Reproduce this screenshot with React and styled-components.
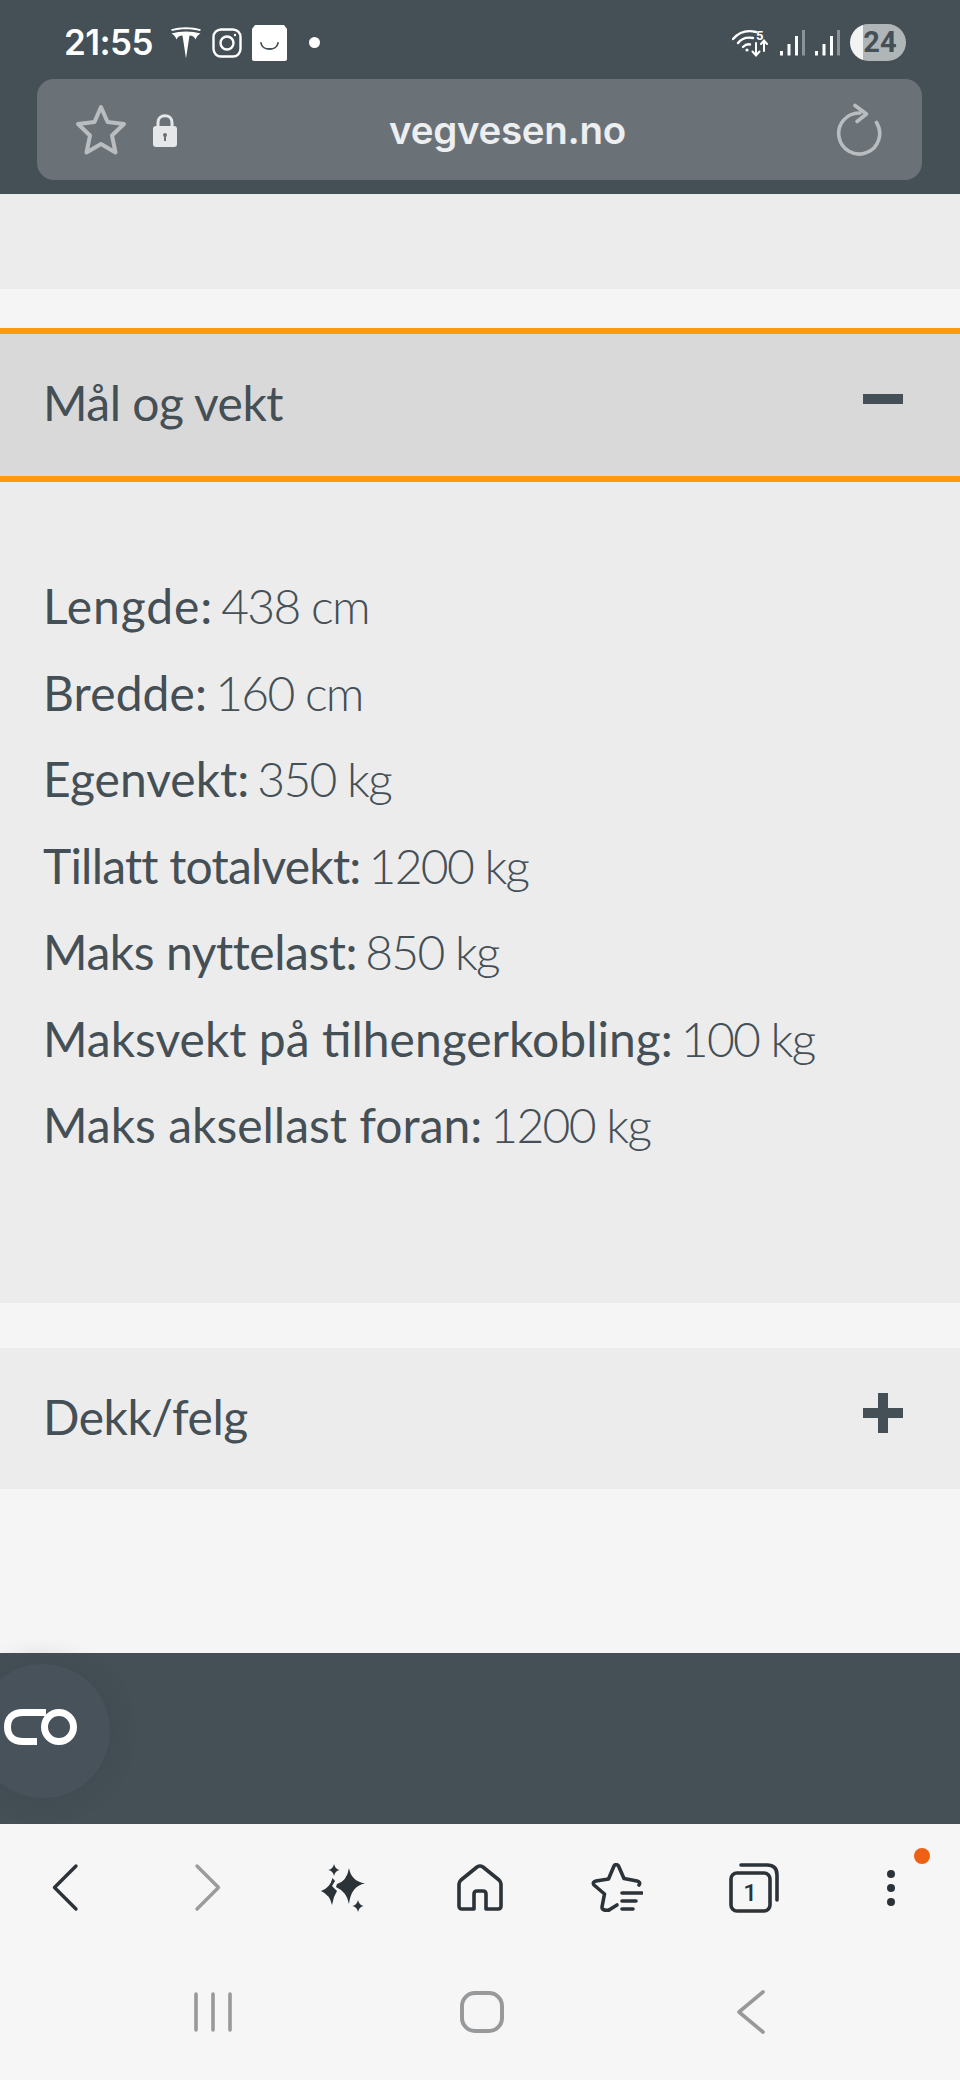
import React from 'react';
import styled, { createGlobalStyle } from 'styled-components';

// track evens out the width differences against the original typeface
const rows = [
  { label: 'Lengde:', value: '438 cm', track: 0.9 },
  { label: 'Bredde:', value: '160 cm', track: 0.1 },
  { label: 'Egenvekt:', value: '350 kg', track: 0 },
  { label: 'Tillatt totalvekt:', value: '1200 kg', track: -0.8 },
  { label: 'Maks nyttelast:', value: '850 kg', track: -0.45 },
  { label: 'Maksvekt på tilhengerkobling:', value: '100 kg', track: 0 },
  { label: 'Maks aksellast foran:', value: '1200 kg', track: 0 },
];

const Global = createGlobalStyle`
  html, body { margin: 0; padding: 0; background: #f5f5f5; }
  * { box-sizing: border-box; }
`;

const Page = styled.div`
  width: 960px;
  height: 2080px;
  display: flex;
  flex-direction: column;
  overflow: hidden;
  position: relative;
  background: #f5f5f5;
  font-family: Lato, "Open Sans", sans-serif;
  color: #444f56;
`;

const TopBar = styled.header`
  height: 194px;
  background: #444f56;
  padding: 24px 38px 14px 37px;
  display: flex;
  flex-direction: column;
  justify-content: space-between;
`;

const StatusRow = styled.div`
  height: 37px;
  display: flex;
  align-items: center;
  justify-content: space-between;
  padding: 0 16px 0 27px;
`;

const StatusGroup = styled.div`
  display: flex;
  align-items: center;
  gap: 10px;
`;

const Time = styled.span`
  font: 600 35px/37px Inter, Roboto, sans-serif;
  letter-spacing: -0.6px;
  color: #fff;
  margin-right: 7px;
`;

const NoticeDot = styled.span`
  width: 11px;
  height: 11px;
  border-radius: 50%;
  background: #fff;
  margin-left: 12px;
`;

const Battery = styled.div`
  width: 56px;
  height: 37px;
  border-radius: 19px;
  background: linear-gradient(90deg, #f2f3f3 0 13px, #b0b5b8 13px);
  color: #444f56;
  font: 700 29px/37px Roboto, sans-serif;
  text-align: center;
  padding-left: 4px;
`;

const UrlBar = styled.div`
  height: 101px;
  border-radius: 17px;
  background: #6a7278;
  display: flex;
  align-items: center;
  padding: 0 40px 0 38px;
`;

const UrlText = styled.div`
  flex: 1;
  text-align: center;
  font: 600 38.5px/46px Inter, Roboto, sans-serif;
  letter-spacing: -0.3px;
  color: #eceef0;
  margin-left: 1px;
`;

const LockSlot = styled.div`
  margin-left: 25px;
  display: flex;
`;

const Main = styled.main`
  flex: 1;
  display: flex;
  flex-direction: column;
`;

const Band = styled.div`
  height: 95px;
  background: #ececec;
  margin-bottom: 39px;
`;

const AccordionHeader = styled.div`
  display: flex;
  align-items: center;
  justify-content: space-between;
  padding: 0 57px 0 43px;
  height: ${(p) => (p.$open ? 154 : 141)}px;
  background: ${(p) => (p.$open ? '#d9d9d9' : '#ececec')};
  border-top: ${(p) => (p.$open ? '6px solid #ff9a0d' : 'none')};
  border-bottom: ${(p) => (p.$open ? '6px solid #ff9a0d' : 'none')};
`;

const Title = styled.h2`
  margin: 0 0 4px;
  font-size: 48px;
  font-weight: 400;
  line-height: 60px;
  letter-spacing: -0.5px;
`;

const ToggleIcon = styled.svg`
  display: block;
  margin-bottom: 12px;
`;

const Panel = styled.div`
  height: 821px;
  background: #ececec;
  padding: 81px 43px 0;
  margin-bottom: 45px;
`;

const Row = styled.div`
  height: 86.5px;
  line-height: 86.5px;
  font-size: 48px;
  white-space: nowrap;
  font-weight: 300;
`;

const RowLabel = styled.span`
  font-weight: 400;
  letter-spacing: ${(p) => p.$track}px;
`;

const RowValue = styled.span`
  letter-spacing: -1.7px;
  margin-left: -5px;
`;

const Footer = styled.footer`
  height: 171px;
  background: #444f56;
  position: relative;
  flex: none;
`;

const ChatBubble = styled.div`
  position: absolute;
  left: -24px;
  top: 11px;
  width: 134px;
  height: 134px;
  border-radius: 50%;
  background: #47525a;
  box-shadow: 0 0 24px rgba(60, 66, 74, 0.45);
  display: flex;
  align-items: center;
  justify-content: flex-end;
  padding: 0 32px 8px 0;
`;

const BrowserNav = styled.nav`
  height: 126px;
  background: #f6f6f7;
  display: flex;
  align-items: center;
  padding-top: 1px;
`;

const NavCell = styled.div`
  width: 137px;
  display: flex;
  justify-content: center;
  position: relative;
  padding: 0 ${(p) => p.$right || 0}px 0 ${(p) => p.$left || 0}px;
`;

const Badge = styled.span`
  position: absolute;
  left: 92px;
  top: -22px;
  width: 16px;
  height: 16px;
  border-radius: 50%;
  background: #ee6115;
`;

const SystemNav = styled.div`
  height: 130px;
  background: #f6f6f7;
  display: grid;
  grid-template-columns: repeat(3, 269px);
  padding: 0 78px 6px;
  align-items: center;
  justify-items: center;
`;

const Icon = styled.svg`
  display: block;
  flex: none;
`;

function Tesla() {
  return (
    <Icon width="32" height="32" viewBox="0 0 32 32" fill="#fff">
      <path d="M16 31.5 L12.5 8.5 C9.5 8.5 7.5 10 6.5 12.5 C5.5 9.5 3.5 7.5 1.5 6.5 C10 3.8 22 3.8 30.5 6.5 C28.5 7.5 26.5 9.5 25.5 12.5 C24.5 10 22.5 8.5 19.5 8.5 Z" />
      <path d="M1 2.6 C10 -0.4 22 -0.4 31 2.6 L30 4 C22 1.6 10 1.6 2 4 Z" />
    </Icon>
  );
}

function Instagram() {
  return (
    <Icon width="30" height="30" viewBox="0 0 30 30" fill="none" stroke="#fff" strokeWidth="2.4">
      <rect x="1.5" y="1.5" width="27" height="27" rx="7.5" />
      <circle cx="15" cy="15" r="6.5" />
      <circle cx="23" cy="7" r="1.2" fill="#fff" stroke="none" />
    </Icon>
  );
}

function Bag() {
  return (
    <Icon width="35" height="36" viewBox="0 0 35 36">
      <path d="M3 0 H32 L35 4 V34 Q35 36 33 36 H2 Q0 36 0 34 V4 Z" fill="#fff" />
      <path d="M9 18 C10 26 25 26 26 18" fill="none" stroke="#444f56" strokeWidth="1.8" strokeLinecap="round" />
    </Icon>
  );
}

function Wifi() {
  return (
    <Icon width="38" height="28" viewBox="0 0 38 28" fill="none" stroke="#fff" strokeLinecap="round">
      <path d="M1 10 C8 2 16 1 24 3" strokeWidth="2.4" />
      <path d="M6 14 C10 9 16 8 21 9" strokeWidth="2.4" />
      <path d="M11 18 C13 16 16 15 18 15.5" strokeWidth="2.4" />
      <circle cx="15" cy="21" r="1.6" fill="#fff" stroke="none" />
      <path d="M24 14 V26 M20.5 22.5 L24 26.5 L27.5 22.5" strokeWidth="2" />
      <path d="M32 22 V12 M29 15 L32 11.5 L35 15" strokeWidth="2" />
      <text x="24" y="11" fontFamily="Roboto, sans-serif" fontSize="13" fontWeight="700" fill="#fff" stroke="none">5</text>
    </Icon>
  );
}

function Signal() {
  return (
    <Icon width="25" height="26" viewBox="0 0 25 26" fill="#fff">
      <rect x="0" y="21" width="3" height="4.5" />
      <rect x="7.5" y="14" width="3" height="11.5" />
      <rect x="15" y="6" width="3" height="19.5" />
      <rect x="22" y="0" width="3" height="25.5" fill="#8b9297" />
    </Icon>
  );
}

function StarOutline() {
  return (
    <Icon width="52" height="52" viewBox="0 0 52 52" fill="none" stroke="#b9bdc0" strokeWidth="4" strokeLinejoin="round">
      <path d="M26 3 L32.5 18 L49 20 L37 31.5 L40.5 48.5 L26 40 L11.5 48.5 L15 31.5 L3 20 L19.5 18 Z" />
    </Icon>
  );
}

function Lock() {
  return (
    <Icon width="26" height="34" viewBox="0 0 26 34">
      <path d="M6 15 V9.5 C6 0.5 20 0.5 20 9.5 V15" fill="none" stroke="#e6e7e9" strokeWidth="3" />
      <rect x="1" y="13" width="24" height="21" rx="3" fill="#e6e7e9" />
      <circle cx="13" cy="22" r="2" fill="#6a7278" />
      <rect x="12" y="22" width="2" height="6" fill="#6a7278" />
    </Icon>
  );
}

function Reload() {
  return (
    <Icon width="46" height="54" viewBox="0 0 46 54" fill="none" stroke="#b9bdc0" strokeWidth="3.6" strokeLinecap="round" strokeLinejoin="round">
      <path d="M40.5 19.5 A20.5 20.5 0 1 1 24 10" />
      <path d="M19 2.5 L30.5 11 L21 18.5" />
    </Icon>
  );
}

function Minus() {
  return (
    <ToggleIcon width="40" height="40" viewBox="0 0 40 40">
      <rect x="0" y="15" width="40" height="10" fill="#444f56" />
    </ToggleIcon>
  );
}

function Plus() {
  return (
    <ToggleIcon width="40" height="40" viewBox="0 0 40 40">
      <path d="M15 0 H25 V15 H40 V25 H25 V40 H15 V25 H0 V15 H15 Z" fill="#444f56" />
    </ToggleIcon>
  );
}

function ChatLogo() {
  return (
    <Icon width="74" height="36" viewBox="0 0 74 36" fill="none" stroke="#fff" strokeWidth="7">
      <path d="M42 3.5 H19 C8 3.5 3.5 10 3.5 18 C3.5 26 8 32.5 19 32.5 H33" />
      <circle cx="55" cy="18" r="14.5" />
    </Icon>
  );
}

function Back() {
  return (
    <Icon width="30" height="52" viewBox="0 0 30 52" fill="none" stroke="#2b3238" strokeWidth="3.4" strokeLinecap="round" strokeLinejoin="round">
      <path d="M25 4 L3.5 25.5 L25 47" />
    </Icon>
  );
}

function Forward() {
  return (
    <Icon width="30" height="52" viewBox="0 0 30 52" fill="none" stroke="#9a9b9d" strokeWidth="3.4" strokeLinecap="round" strokeLinejoin="round">
      <path d="M5 4 L26.5 25.5 L5 47" />
    </Icon>
  );
}

function Sparkles() {
  return (
    <Icon width="46" height="50" viewBox="0 0 46 50" fill="#2b3238">
      <path d="M29 5 Q31 18 45 20.5 Q31 23 29 41 Q27 29 16 24 L17 21 Q27 18 29 5 Z" />
      <path d="M12.5 15 L15 18 L12 23 L17 28 L14 34 L12 42 Q10 32 1 28 Q10 25 12.5 15 Z" />
      <path d="M14 1 Q15 6 19.5 7 Q15 8 14 13 Q13 8 8.5 7 Q13 6 14 1 Z" />
      <path d="M38 37 Q39 42 43.5 43 Q39 44 38 49 Q37 44 32.5 43 Q37 42 38 37 Z" />
    </Icon>
  );
}

function Home() {
  return (
    <Icon width="46" height="48" viewBox="0 0 46 48" fill="none" stroke="#2b3238" strokeWidth="3.6" strokeLinejoin="round" strokeLinecap="round">
      <path d="M17 45 H5 Q2 45 2 42 V20 Q2 18 4 16 L20 3 Q23 1 26 3 L42 16 Q44 18 44 20 V42 Q44 45 41 45 H29 V30 Q29 27 26 27 H20 Q17 27 17 30 Z" />
    </Icon>
  );
}

function StarList() {
  return (
    <Icon width="52" height="50" viewBox="0 0 52 50" fill="none" stroke="#2b3238" strokeWidth="3.6" strokeLinecap="round" strokeLinejoin="round">
      <path d="M18 47 Q11 48 11 44 L13.5 31 L3 22 Q1 19 5 18 L17.5 16 L23 3 Q25 0 27.5 3 L33 15.5 L46 18 Q50 19 48 22" />
      <path d="M18 47 L26 42" />
      <path d="M31 30 H51 M31 38 H45 M31 46 H42" />
    </Icon>
  );
}

function Tabs() {
  return (
    <Icon width="50" height="50" viewBox="0 0 50 50" fill="none" stroke="#2b3238" strokeWidth="3.6" strokeLinecap="round">
      <rect x="2" y="10" width="39" height="38" rx="6" />
      <path d="M12 2 H38 Q48 2 48 12 V37" />
      <text x="21" y="38" textAnchor="middle" fontFamily="Roboto, sans-serif" fontSize="24" fontWeight="500" fill="#2b3238" stroke="none">1</text>
    </Icon>
  );
}

function Dots() {
  return (
    <Icon width="8" height="36" viewBox="0 0 8 36" fill="#2b3238">
      <circle cx="4" cy="4" r="4" />
      <circle cx="4" cy="18" r="4" />
      <circle cx="4" cy="32" r="4" />
    </Icon>
  );
}

function Recents() {
  return (
    <Icon width="38" height="40" viewBox="0 0 38 40" fill="none" stroke="#97999b" strokeWidth="3.6" strokeLinecap="round">
      <path d="M2 2 V38 M19 2 V38 M36 2 V38" />
    </Icon>
  );
}

function HomeButton() {
  return (
    <Icon width="44" height="44" viewBox="0 0 44 44" fill="none" stroke="#97999b" strokeWidth="4">
      <rect x="2" y="3" width="40" height="38" rx="13" />
    </Icon>
  );
}

function SystemBack() {
  return (
    <Icon width="30" height="44" viewBox="0 0 30 44" fill="none" stroke="#97999b" strokeWidth="3.6" strokeLinecap="round" strokeLinejoin="round">
      <path d="M27 2 L3 22 L27 42" />
    </Icon>
  );
}

export default function App() {
  return (
    <Page>
      <Global />
      <TopBar>
        <StatusRow>
          <StatusGroup>
            <Time>21:55</Time>
            <Tesla />
            <Instagram />
            <Bag />
            <NoticeDot />
          </StatusGroup>
          <StatusGroup>
            <Wifi />
            <Signal />
            <Signal />
            <Battery>24</Battery>
          </StatusGroup>
        </StatusRow>
        <UrlBar>
          <StarOutline />
          <LockSlot><Lock /></LockSlot>
          <UrlText>vegvesen.no</UrlText>
          <Reload />
        </UrlBar>
      </TopBar>
      <Main>
        <Band />
        <AccordionHeader $open>
          <Title>Mål og vekt</Title>
          <Minus />
        </AccordionHeader>
        <Panel>
          {rows.map((row) => (
            <Row key={row.label}>
              <RowLabel $track={row.track}>{row.label}</RowLabel> <RowValue>{row.value}</RowValue>
            </Row>
          ))}
        </Panel>
        <AccordionHeader>
          <Title>Dekk/felg</Title>
          <Plus />
        </AccordionHeader>
      </Main>
      <Footer>
        <ChatBubble>
          <ChatLogo />
        </ChatBubble>
      </Footer>
      <BrowserNav>
        <NavCell $right={5}><Back /></NavCell>
        <NavCell $left={3}><Forward /></NavCell>
        <NavCell><Sparkles /></NavCell>
        <NavCell><Home /></NavCell>
        <NavCell><StarList /></NavCell>
        <NavCell><Tabs /></NavCell>
        <NavCell><Dots /><Badge /></NavCell>
      </BrowserNav>
      <SystemNav>
        <Recents />
        <HomeButton />
        <SystemBack />
      </SystemNav>
    </Page>
  );
}
